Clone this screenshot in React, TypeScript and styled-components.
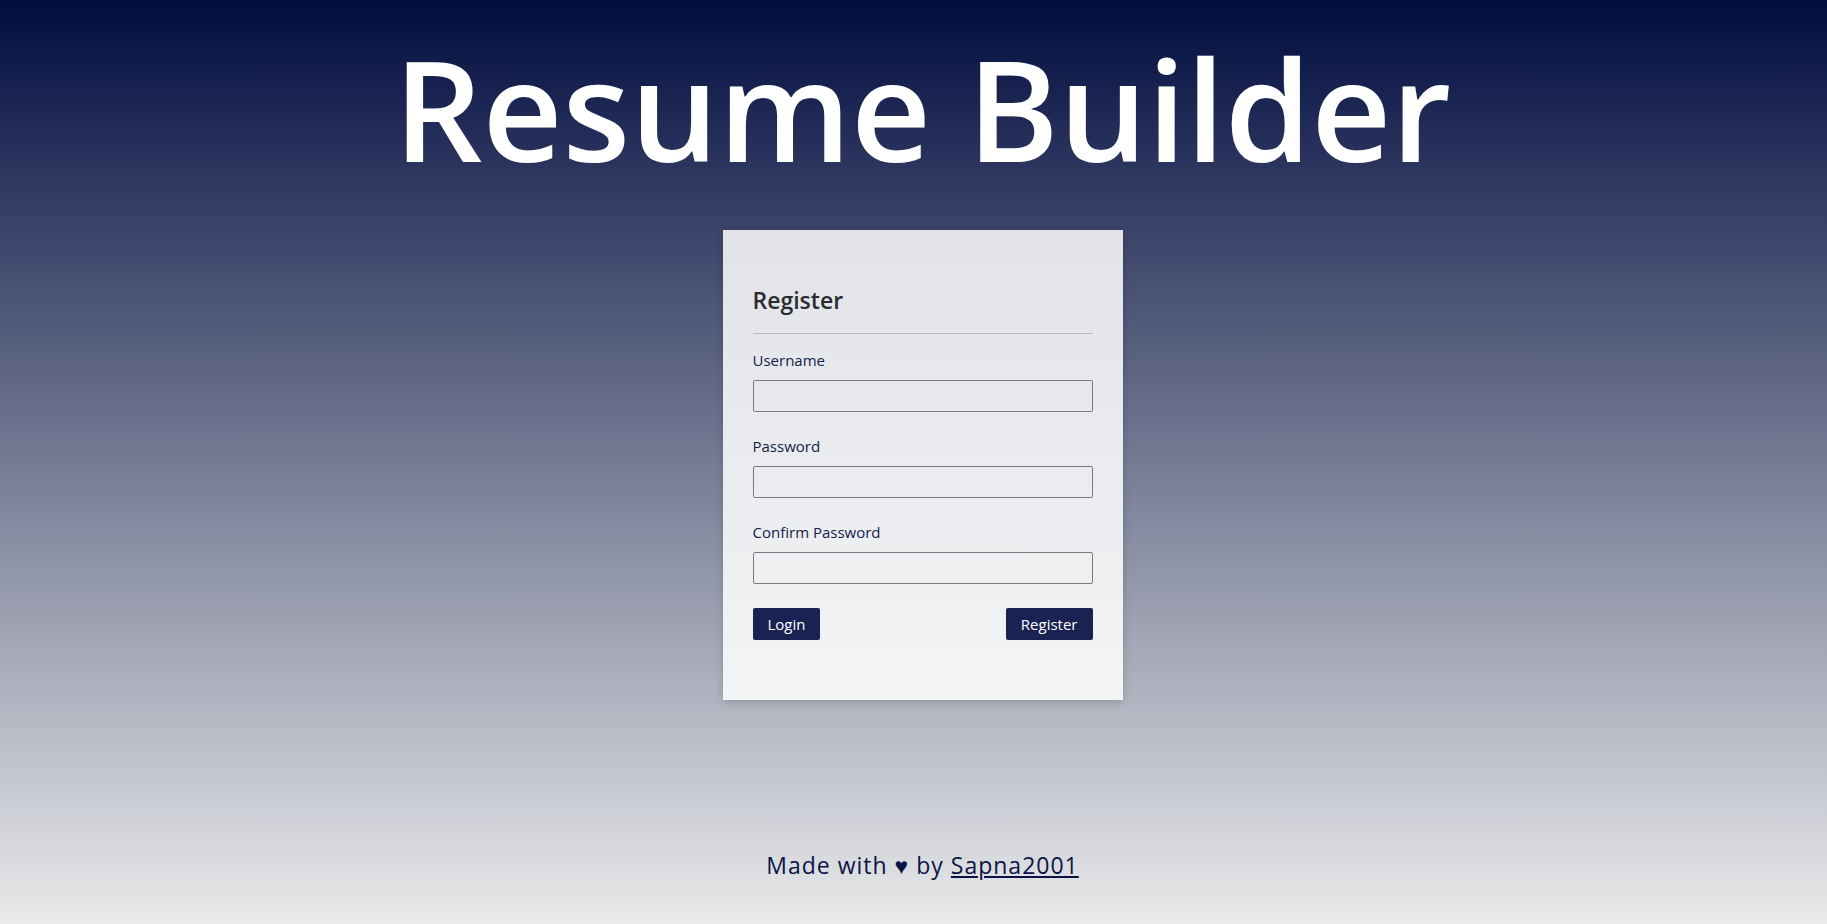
import styled, { createGlobalStyle } from 'styled-components'

const GlobalStyle = createGlobalStyle`
  * { box-sizing: border-box; }
  html, body { margin: 0; padding: 0; }
  body {
    font-family: "Open Sans", "Liberation Sans", sans-serif;
    background: linear-gradient(180deg, #010d3f 0%, #e9eaea 100%);
    min-height: 100vh;
  }
`

const Page = styled.div`
  min-height: 100vh;
  padding-left: 18px;
  display: flex;
  flex-direction: column;
  align-items: center;
`

const Title = styled.h1`
  margin: 39px 0 0;
  font-size: 139px;
  line-height: 1;
  font-weight: 600;
  color: #ffffff;
`

const Card = styled.div`
  width: 400px;
  margin-top: 52px;
  padding: 56px 30px 60px;
  background: linear-gradient(180deg, #e2e3e8 0%, #f3f4f5 100%);
  box-shadow: 0 2px 8px rgba(0, 0, 0, 0.18);
`

const Heading = styled.h2`
  margin: 0;
  font-size: 23px;
  line-height: 29px;
  font-weight: 600;
  color: #2b2c30;
`

const Divider = styled.hr`
  margin: 18px 0 16px;
  border: 0;
  border-top: 1px solid #b9babe;
`

const Field = styled.div`
  display: flex;
  flex-direction: column;
  gap: 10px;
  margin-bottom: 24px;
`

const Label = styled.label`
  font-size: 15px;
  line-height: 20px;
  color: #141b4d;
`

const Input = styled.input`
  height: 32px;
  width: 100%;
  background: transparent;
  border: 1px solid #7a7a7e;
  border-radius: 2px;
  padding: 0 8px;
  font: inherit;
`

const Actions = styled.div`
  display: flex;
  justify-content: space-between;
`

const Button = styled.button`
  height: 32px;
  padding: 0 15px;
  background: #1a2253;
  color: #ffffff;
  border: 0;
  border-radius: 2px;
  font-family: inherit;
  font-size: 15px;
`

const Footer = styled.footer`
  margin-top: auto;
  padding-bottom: 43px;
  font-size: 23px;
  letter-spacing: 1px;
  color: #0b1346;

  a {
    color: inherit;
  }
`

export default function App() {
  return (
    <>
      <GlobalStyle />
      <Page>
        <Title>Resume Builder</Title>
        <Card>
          <Heading>Register</Heading>
          <Divider />
          <Field>
            <Label>Username</Label>
            <Input type="text" />
          </Field>
          <Field>
            <Label>Password</Label>
            <Input type="password" />
          </Field>
          <Field>
            <Label>Confirm Password</Label>
            <Input type="password" />
          </Field>
          <Actions>
            <Button>Login</Button>
            <Button>Register</Button>
          </Actions>
        </Card>
        <Footer>
          Made with ♥ by <a href="#">Sapna2001</a>
        </Footer>
      </Page>
    </>
  )
}
